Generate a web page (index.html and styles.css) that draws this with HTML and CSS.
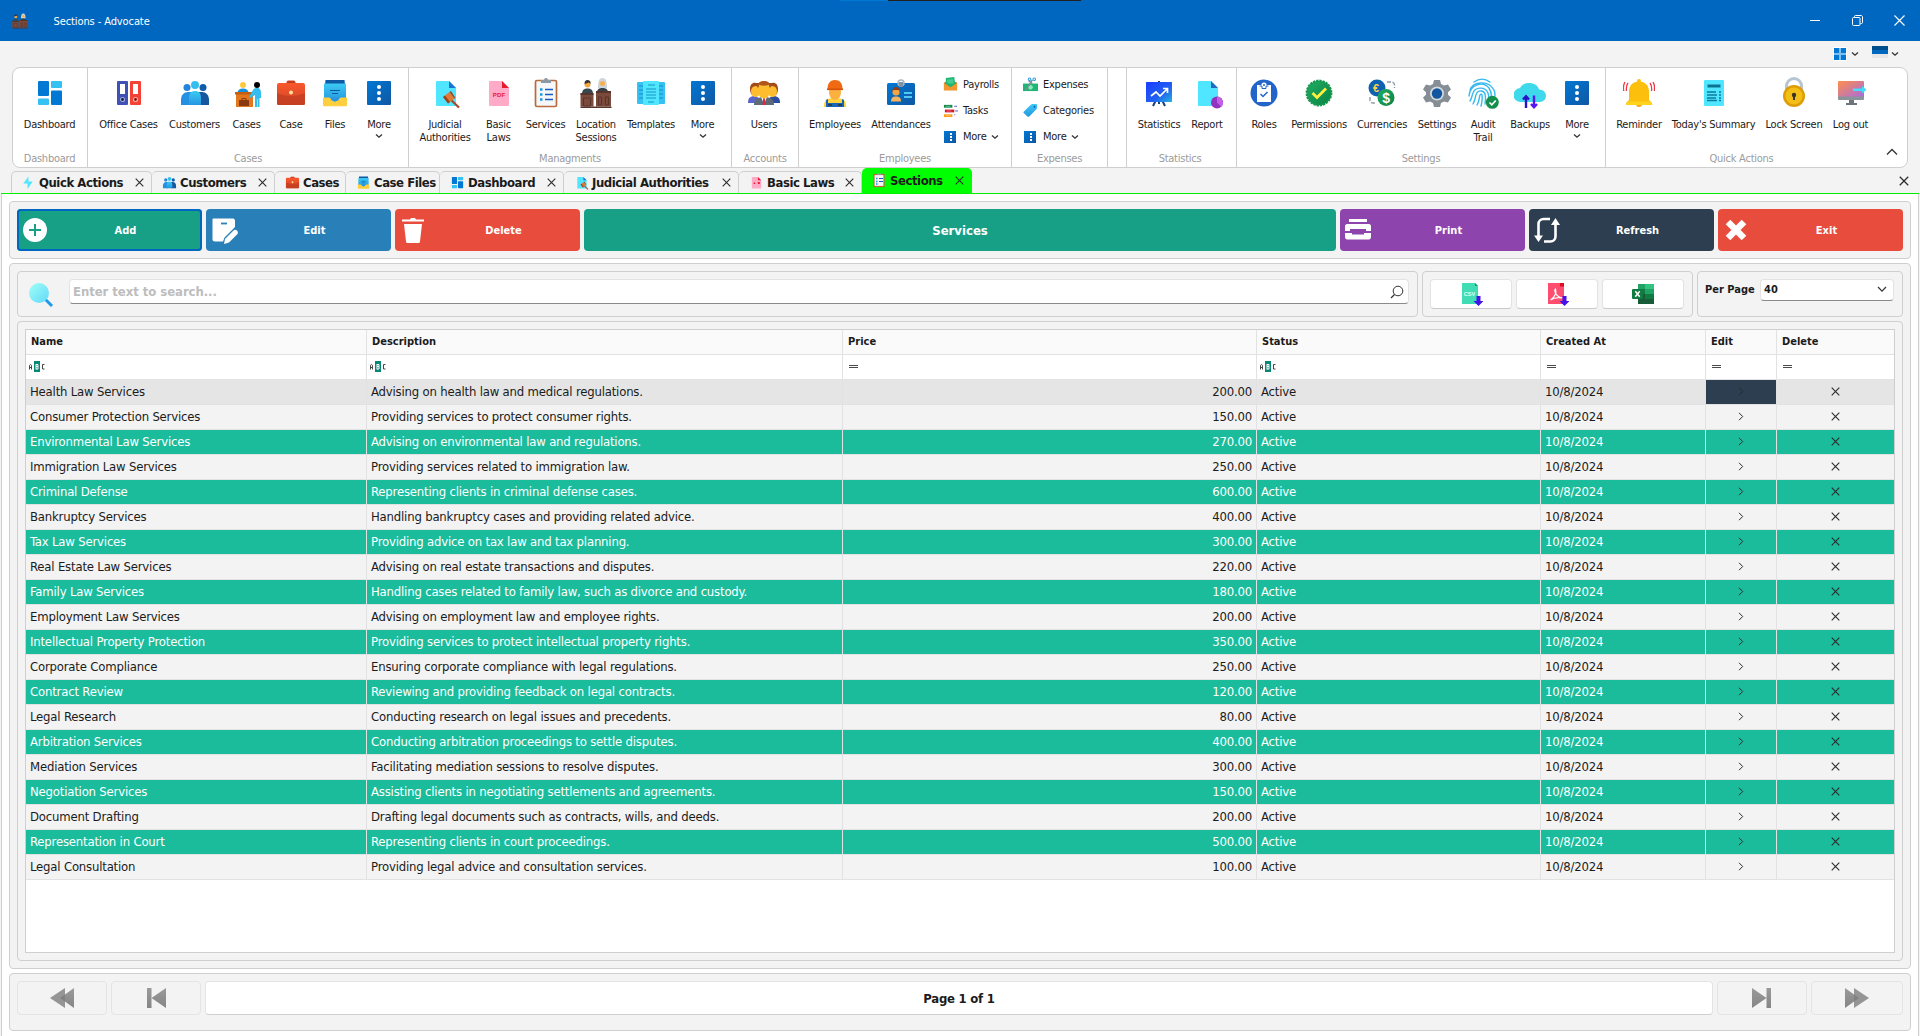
FILE: index.html
```html
<!DOCTYPE html>
<html lang="en">
<head>
<meta charset="utf-8">
<title>Sections - Advocate</title>
<link rel="stylesheet" href="styles.css">
</head>
<body>
<svg class="sprite" aria-hidden="true">
  <defs>
    <linearGradient id="g-blue" x1="0" y1="0" x2="1" y2="1"><stop offset="0" stop-color="#0078d4"/><stop offset="1" stop-color="#1057a3"/></linearGradient>
    <linearGradient id="g-sky" x1="0" y1="0" x2="0" y2="1"><stop offset="0" stop-color="#3ccbf4"/><stop offset="1" stop-color="#2596e0"/></linearGradient>
    <linearGradient id="g-red" x1="0" y1="0" x2="0" y2="1"><stop offset="0" stop-color="#f9572c"/><stop offset="1" stop-color="#cf4526"/></linearGradient>
    <linearGradient id="g-green" x1="0" y1="0" x2="1" y2="1"><stop offset="0" stop-color="#21ad64"/><stop offset="1" stop-color="#088242"/></linearGradient>
    <linearGradient id="g-board" x1="0" y1="0" x2="1" y2="1"><stop offset="0" stop-color="#1b3cff"/><stop offset=".6" stop-color="#2060f0"/><stop offset="1" stop-color="#25b4de"/></linearGradient>
    <linearGradient id="g-screen" x1="0" y1="0" x2="1" y2="1"><stop offset="0" stop-color="#ff8f4a"/><stop offset="1" stop-color="#a86be0"/></linearGradient>
    <linearGradient id="g-lens" x1="0" y1="0" x2="1" y2="1"><stop offset="0" stop-color="#a0fff6"/><stop offset="1" stop-color="#62d8fa"/></linearGradient>
    <linearGradient id="g-gray" x1="0" y1="0" x2="0" y2="1"><stop offset="0" stop-color="#9a9a9a"/><stop offset="1" stop-color="#858585"/></linearGradient>
  </defs>
  <symbol id="i-dash" viewBox="0 0 32 32"><rect x="4" y="4" width="11" height="15" rx="1" fill="#0078d4"/><rect x="17" y="4" width="11" height="7" rx="1" fill="#35c1f1"/><rect x="4" y="21.500" width="11" height="6.500" rx="1" fill="#35c1f1"/><rect x="17" y="13.500" width="11" height="14.500" rx="1" fill="#0078d4"/></symbol>
  <symbol id="i-binders" viewBox="0 0 32 32"><rect x="4" y="4" width="11" height="24" rx="1" fill="#3f51b5"/><rect x="17" y="4" width="11" height="24" rx="1" fill="#f44336"/><path fill="#fff" d="M7 7h5v10H7zM20 7h5v10h-5z"/><circle cx="9.500" cy="22.500" r="2" fill="#111a3a" stroke="#9fa8da" stroke-width="1.200"/><circle cx="22.500" cy="22.500" r="2" fill="#7f1010" stroke="#ffab91" stroke-width="1.200"/></symbol>
  <symbol id="i-people" viewBox="0 0 32 32"><circle cx="8" cy="10.500" r="3.500" fill="#2285dc"/><path d="M2 28v-5c0-5 3-8 7-8h4v13z" fill="#2490e2"/><circle cx="24" cy="10.500" r="3.500" fill="#0d5cab"/><path d="M30 28v-5c0-5-3-8-7-8h-4v13z" fill="#17579e"/><circle cx="16" cy="8" r="4" fill="#35bdef"/><path d="M10 28v-6c0-6 2-8 6-8s6 2 6 8v6z" fill="url(#g-sky)"/></symbol>
  <symbol id="i-desk" viewBox="0 0 32 32"><circle cx="12" cy="8" r="3" fill="#ffc83d"/><path d="M6.500 16c0-3 2-4.500 5.500-4.500s5.500 1.500 5.500 4.500z" fill="#1490df"/><rect x="5" y="16" width="17" height="14" fill="#e1771e"/><path d="M4 15h19v2.500H4z" fill="#c45f12"/><rect x="8" y="23" width="10" height="6" rx=".5" fill="#8a3a12"/><path d="M11 23v-1.500h4V23" fill="none" stroke="#8a3a12"/><circle cx="26" cy="8" r="3" fill="#000"/><path d="M18 20l4-7c1-1.500 2-2 4-2 3 0 4 2 4 5v5h-1.500v9h-2v-8H26v8h-2v-12l-4.500 3z" fill="#35bdef"/></symbol>
  <symbol id="i-case" viewBox="0 0 32 32"><path d="M12 6.500V5c0-.6.400-1 1-1h6c.6 0 1 .4 1 1v1.500" fill="#b83b1e" stroke="#d04525"/><rect x="2" y="6" width="28" height="22" rx="2" fill="url(#g-red)"/><path d="M2 16c8 4 20 4 28 0v11a1 1 0 0 1-1 1H3a1 1 0 0 1-1-1z" fill="#c23d20" opacity=".75"/><circle cx="16" cy="15.500" r="2" fill="#ffe39b"/></symbol>
  <symbol id="i-files" viewBox="0 0 32 32"><path d="M6.500 3h19l.5 5H6z" fill="#0e5aa5"/><path d="M5 6.500h22V24H5z" fill="url(#g-sky)"/><path d="M11 13.500h10M13 16.500h6" stroke="#0c5b9e" stroke-width="1.100"/><path d="M4 20.500h6c2 0 2 3.500 4 3.500h4c2 0 2-3.500 4-3.500h6V28a1.200 1.200 0 0 1-1.200 1.200H5.200A1.200 1.200 0 0 1 4 28z" fill="#ffcf3f"/><path d="M10 20.500h12c-2 0-2.500 1.500-6 4.500-3.500-3-4-4.500-6-4.500z" fill="#2a96e0"/></symbol>
  <symbol id="i-more" viewBox="0 0 32 32"><rect x="4" y="4" width="24" height="24" rx="1" fill="url(#g-blue)"/><g fill="#fff"><circle cx="16" cy="10" r="2"/><circle cx="16" cy="16" r="2"/><circle cx="16" cy="22" r="2"/></g></symbol>
  <symbol id="i-more-s" viewBox="0 0 15 15"><rect x="1" y="2" width="12" height="12" fill="url(#g-blue)"/><path d="M7 4h2v2H7zM7 7h2v2H7zM7 10h2v2H7z" fill="#fff"/></symbol>
  <symbol id="i-gavel" viewBox="0 0 32 32"><path d="M8 4h12l7 7v18H8a1 1 0 0 1-1-1V5a1 1 0 0 1 1-1z" fill="#50e6ff"/><path d="M20 4l7 7h-7z" fill="#1d73d2"/><path d="M21 22l9 8.500" stroke="#a5472a" stroke-width="2.200"/><path d="M14 20l6.500-5 5 6.500-6.500 5z" fill="#e07a35"/><path d="M14 20l2-1.500 5 6.500-2 1.500zM20.500 15l1.500-1 4.500 7-1 .5z" fill="#9c4221"/></symbol>
  <symbol id="i-pdf" viewBox="0 0 32 32"><path d="M7 4h12l7 7v17a1 1 0 0 1-1 1H7a1 1 0 0 1-1-1V5a1 1 0 0 1 1-1z" fill="#ffabc7"/><path d="M19 4l7 7h-7z" fill="#e8192c"/></symbol>
  <symbol id="i-clip" viewBox="0 0 32 32"><rect x="5.500" y="3.500" width="21" height="26" rx="1.500" fill="#f6f7f9" stroke="#b96b3e" stroke-width="1.700"/><path d="M11 3h3a2 2 0 0 1 4 0h3v3H11z" fill="#8c9aa5"/><path d="M10 12.500h2.500M10 17.500h2.500M10 22.500h2.500" stroke="#199be2" stroke-width="2.500"/><path d="M15 12.500h8M15 17.500h8M15 22.500h8" stroke="#185abd" stroke-width="1.500"/></symbol>
  <symbol id="i-clip-s" viewBox="0 0 15 15"><rect x="2" y="1.500" width="10" height="12" fill="#f6f7f9" stroke="#b96b3e" stroke-width="1.200"/><path d="M5 .5h4v1.500H5z" fill="#8c9aa5"/><path d="M4 5.500h1.500M4 8.500h1.500M4 11h1.500" stroke="#199be2" stroke-width="1.300"/><path d="M7 5.500h4M7 8.500h4" stroke="#185abd" stroke-width="1.200"/></symbol>
  <symbol id="i-court" viewBox="0 0 32 32"><path d="M18 11c0-7 1-10 4.500-10S27 4 27 11z" fill="#ccd5db"/><circle cx="22.500" cy="6.500" r="2.500" fill="#f6b04d"/><path d="M17 16c0-4 2-5 5.500-5s5.500 1 5.500 5z" fill="#37414a"/><circle cx="7.500" cy="7.500" r="3" fill="#f2a63c"/><path d="M4.500 7c0-3 1-4 3-4s3.500 1 3 4l-1.500-1.500z" fill="#333"/><path d="M2 17c0-4 2-5.500 5.500-5.500S13 13 13 17z" fill="#37474f"/><path d="M.500 16.500h13v13H.5z" fill="#7a4a3c"/><path d="M16 14.500h15v15H16z" fill="#7a4a3c"/><path d="M.500 16h13v2H.5zM16 14h15v2H16zM.500 29.500h31V31H.5z" fill="#58342b"/><path d="M3.500 21h7v8h-7zM18.500 20h3v8h-3zM25.500 20h3v8h-3z" fill="none" stroke="#58342b"/></symbol>
  <symbol id="i-templates" viewBox="0 0 32 32"><rect x="2" y="5" width="28" height="22" rx="1" fill="#35c1f1"/><path d="M4 9h5M4 13h5M4 17h5M4 21h5M24 9h4M24 13h4M24 17h4M24 21h4" stroke="#1791c7" stroke-width="1.200"/><rect x="8" y="4" width="16" height="24" rx="1" fill="#50e6ff"/><path d="M13 8h7M11 12h10M11 15h10M11 18h10M11 21h10M13 25h6" stroke="#1493c8" stroke-width="1.200"/></symbol>
  <symbol id="i-users" viewBox="0 0 32 32"><path d="M0 26c0-5 2-7 7-7l4 2v5z" fill="#5b64c8"/><path d="M32 26c0-5-2-7-7-7l-4 2v5z" fill="#2b4ea0"/><path d="M2 12c0-5 3-7 6-6h3v12H4c-1-1-2-3-2-6zM30 12c0-5-3-7-6-6h-3v12h7c1-1 2-3 2-6z" fill="#a24a1c"/><ellipse cx="7.500" cy="14.500" rx="4.500" ry="5.500" fill="#fdbd2e"/><ellipse cx="24.500" cy="14.500" rx="4.500" ry="5.500" fill="#fdbd2e"/><path d="M6 28c0-6 4-8 10-8s10 2 10 8z" fill="#5d6b78"/><path d="M13 20h6l-3 7z" fill="#fff"/><path d="M15.200 21h1.600l.6 7h-2.800z" fill="#dd2a3b"/><ellipse cx="16" cy="13.500" rx="6" ry="8" fill="#fdbd2e"/><path d="M9.500 11c0-6 3-7 6.500-7s6.500 1 6.500 7l-2-3c-3 1-6 1-9 0z" fill="#b0571d"/></symbol>
  <symbol id="i-worker" viewBox="0 0 32 32"><path d="M5 29c0-6 3-8 11-8s11 2 11 8v1H5z" fill="#ffd33c"/><path d="M9 22v4h14v-4l2 1v7H7v-7z" fill="#1766b3"/><ellipse cx="16" cy="15.500" rx="6" ry="7.500" fill="#fbb040"/><path d="M8.500 12c0-6 3-9 7.500-9s7.500 3 7.500 9z" fill="#ef6a12"/><path d="M8 11.500h16v1.600H8z" fill="#d4500b"/><path d="M9 28h4M19 28h4" stroke="#27323c" stroke-width="1.500"/></symbol>
  <symbol id="i-badge" viewBox="0 0 32 32"><rect x="2" y="6" width="28" height="22" rx="1.500" fill="url(#g-blue)"/><circle cx="16" cy="6" r="3" fill="none" stroke="#a9b6c2" stroke-width="1.500"/><path d="M14 5h4v5h-4z" fill="#7f93a6"/><circle cx="11" cy="15" r="3.600" fill="#f7a541"/><path d="M7.400 15c0-4 1.500-5 3.600-5s3.600 1 3.600 5l-1-2h-5z" fill="#8e3e17"/><path d="M6 24.500c0-4 2-5 5-5s5 1 5 5z" fill="#f7b35e"/><path d="M19 16h8M19 20h8" stroke="#50c8f5" stroke-width="1.800"/></symbol>
  <symbol id="i-payroll" viewBox="0 0 16 16"><path d="M1 6l7-3 7 3v8H1z" fill="#c9661a"/><path d="M3 1l9-1 1 8-5 3-5-3z" fill="#1fb573"/><path d="M4 3l7-1v5H5z" fill="#41cf92"/><path d="M1 6l7 5 7-5v8H1z" fill="#f2962e"/></symbol>
  <symbol id="i-tasks" viewBox="0 0 16 16"><path fill="#0f8a49" d="M1 2h9v3H1z"/><path fill="#d3172b" d="M2 7h10v3H2z"/><path fill="#ff9c17" d="M1 12h9v3H1z"/><path d="M12 3.500h3M13 8.500h3M12 12.500h1" stroke="#4a54b8"/><path d="M3 3.500h5M4 8.500h5M3 13.500h5" stroke="#fff" opacity=".4"/></symbol>
  <symbol id="i-expense" viewBox="0 0 16 16"><path fill="#1fb573" d="M0 7h16v8H0z"/><circle cx="8" cy="11" r="2.500" fill="#8ae7bb"/><path d="M3 14l7-11M6 4l4 3" stroke="#7f8c96" stroke-width="1.500"/><circle cx="7" cy="2.500" r="1.400" fill="none" stroke="#2a9de2" stroke-width="1.100"/><circle cx="12" cy="2.500" r="1.400" fill="none" stroke="#2a9de2" stroke-width="1.100"/></symbol>
  <symbol id="i-tag" viewBox="0 0 16 16"><path d="M1 9l7-7c1-1 2-1 6-1 1 0 1 1 1 1 0 3 0 4-1 5l-7 7c-1 1-1.600 1-2.500 0L1 11c-.800-.800-.800-1.300 0-2z" fill="url(#g-sky)"/><circle cx="12.300" cy="4" r="1" fill="#0b5ea8"/></symbol>
  <symbol id="i-stats" viewBox="0 0 32 32"><path d="M13 23l-3 6M19 23l3 6M16 23v4" stroke="#17407c" stroke-width="2"/><path d="M15 4h2v2h-2z" fill="#17407c"/><rect x="3" y="5" width="26" height="20" rx=".5" fill="url(#g-board)"/><path d="M8 19l5-4 4 4 7-7M20 11.500h4.500V16" fill="none" stroke="#fff" stroke-width="1.700"/></symbol>
  <symbol id="i-report" viewBox="0 0 32 32"><path d="M8 4h12l7 7v18H8a1 1 0 0 1-1-1V5a1 1 0 0 1 1-1z" fill="#50e6ff"/><path d="M20 4l7 7h-7z" fill="#2468c4"/><circle cx="26" cy="25.500" r="6" fill="#9332bf"/><path d="M26 25.500v-6a6 6 0 0 1 4.200 10.200z" fill="#c25fe8"/></symbol>
  <symbol id="i-roles" viewBox="0 0 32 32"><circle cx="16" cy="16" r="13.500" fill="#2264c9"/><path d="M9 8h14v17H9z" fill="#fff"/><circle cx="16" cy="8" r="2.600" fill="#fff"/><circle cx="16" cy="8" r="1" fill="#2264c9"/><path d="M11.500 9h2.500v2.500h4V9h2.500" fill="none" stroke="#2264c9"/><path d="M12.500 17l2.500 2.500 4.500-4.500" fill="none" stroke="#2264c9" stroke-width="1.500"/></symbol>
  <symbol id="i-perm" viewBox="0 0 32 32"><circle cx="16" cy="16" r="12.300" fill="url(#g-green)" stroke="#16984f" stroke-width="2.200" stroke-dasharray="2.300 .92"/><path d="M9.500 16l4.500 4.500 9-9" fill="none" stroke="#ffef3e" stroke-width="2.700"/></symbol>
  <symbol id="i-gear" viewBox="0 0 32 32"><path d="M13 3h6l1 4 3 1.600 4-1.200 3 5-3 2.800v2.600l3 2.800-3 5-4-1.200-3 1.600-1 4h-6l-1-4-3-1.600-4 1.200-3-5 3-2.800v-2.600l-3-2.800 3-5 4 1.200L12 7z" fill="#858d95"/><circle cx="16" cy="16.500" r="7" fill="#d3d8dc"/><circle cx="16" cy="16.500" r="5.200" fill="#1256a0"/></symbol>
  <symbol id="i-finger" viewBox="0 0 32 32"><g fill="none" stroke="#35b9ef" stroke-width="1.400" stroke-linecap="round"><path d="M7 5c5-3.600 11-3.600 16 0M3 13c3-9 19-10 24 0 .6 1.500 1 4 1 6M2 19c1-12 14-15 20-8 2 3 2.500 6 2.500 9M3 24c2-3 2-6 3-8 2-6 12-7 15 0 .8 2 1 5 1 8M6 27c3-5 2-8 3.500-10.500 2-4 7.500-3 8.500.5.800 3 .5 7 0 10M10 28c3-5 2-8 3-10 .6-1 1.800-1 2 0 .5 3 0 7-1 11"/></g><circle cx="25.300" cy="25.300" r="6.500" fill="#12904c"/><path d="M22.500 25.500l2.300 2.300 4-4.300" fill="none" stroke="#fff" stroke-width="1.700"/></symbol>
  <symbol id="i-cloud" viewBox="0 0 32 32"><path d="M7 25a7 7 0 0 1-1-14C8 7 12 5.500 16 6c5 .4 8 3 9 6.500 4 .2 7 2.500 7 6.200 0 3.800-3 6.300-6.500 6.300z" fill="#3fd9ec"/><path d="M12 31V21M9 22.500l3-3.200 3 3.200" fill="none" stroke="#2a12c8" stroke-width="2.400"/><path d="M20 18.500V29M17 27l3 3.200 3-3.200" fill="none" stroke="#5a14f2" stroke-width="2.400"/></symbol>
  <symbol id="i-bell" viewBox="0 0 32 32"><circle cx="16" cy="27" r="3" fill="#f4a81b"/><circle cx="16" cy="4" r="2" fill="#ffc20e"/><path d="M6 23V15C6 8 10 4.500 16 4.500S26 8 26 15v8l3 3v2H3v-2z" fill="#fbbf0c"/><path d="M4.500 24.500h23L29.500 28h-27z" fill="#ffd31c"/><path d="M5 6c-1.500 2-2 4.500-1.500 8M2 5C.5 7.500 0 10 .7 14M27 6c1.500 2 2 4.500 1.500 8M30 5c1.500 2.500 2 5 1.300 9" fill="none" stroke="#f03a47" stroke-width="1.300"/></symbol>
  <symbol id="i-summary" viewBox="0 0 32 32"><rect x="6" y="3" width="20" height="26" rx="1" fill="#50e6ff"/><path d="M9.500 9h13" stroke="#0a7590" stroke-width="3"/><path d="M9 15h9M9 18h10M9 21h9M9 23.500h10M21 15h2M21 18h2M21 21h2M21 23.500h2" stroke="#0a7c9a" stroke-width="1.300"/></symbol>
  <symbol id="i-lock" viewBox="0 0 32 32"><path d="M8.500 16V9a7.500 7.500 0 0 1 15 0v7" fill="none" stroke="#b7c5d0" stroke-width="3"/><circle cx="16" cy="19" r="11" fill="#dd9d06"/><circle cx="16" cy="19" r="8.500" fill="#f3bf17"/><circle cx="16" cy="18" r="2.200" fill="#3c3320"/><path d="M15 18h2v5h-2z" fill="#3c3320"/></symbol>
  <symbol id="i-logout" viewBox="0 0 32 32"><path d="M4 4h24a1 1 0 0 1 1 1v15H3V5a1 1 0 0 1 1-1z" fill="url(#g-screen)"/><path d="M3 19.500h26V22a1 1 0 0 1-1 1H4a1 1 0 0 1-1-1z" fill="#8b939b"/><path d="M14 23h5v3h3v2H11v-2h3z" fill="#6c747c"/><path d="M18 11.500h9V9l4.500 3.700-4.500 3.700V14h-9z" fill="#45dcff"/></symbol>
  <symbol id="i-bolt" viewBox="0 0 12 16"><path d="M6.500 1.500V7H11l-5.500 8V9H1z" fill="#50e6ff"/></symbol>
  <symbol id="i-chev" viewBox="0 0 8 6"><path d="M1 1.500l3 2.700 3-2.700" fill="none" stroke="#333" stroke-width="1.300"/></symbol>
  <symbol id="i-x" viewBox="0 0 9 9"><path d="M.7.7l7.600 7.600M8.300.7L.7 8.300" stroke="#2b2b2b" stroke-width="1.100"/></symbol>
  <symbol id="i-go" viewBox="0 0 6 9"><path d="M1 .8l3.700 3.700L1 8.200" fill="none" stroke="#2b2b2b" stroke-width="1"/></symbol>
  <symbol id="i-abc" viewBox="0 0 16 12"><rect x="5" y="0" width="6" height="11" fill="#0b8576"/><path d="M.5 8.500V5c0-2 2-2 2 0v3.500M.5 6.500h2M15.500 3.500h-2v4.500h2" fill="none" stroke="#444"/><path d="M7 3v5.500M7 3.500h2v2H7h2v2.500H7" fill="none" stroke="#fff"/></symbol>
  <symbol id="i-eq" viewBox="0 0 9 3"><path d="M0 .5h9M0 2.500h9" stroke="#4a4a4a"/></symbol>
</svg>

<header class="titlebar">
  <svg class="app-icon"><use href="#i-court"/></svg>
  <h1 class="title">Sections - Advocate</h1>
  <div class="window-controls">
    <svg width="10" height="10" viewBox="0 0 10 10"><path d="M0 5.500h10" stroke="#fff"/></svg>
    <svg width="11" height="11" viewBox="0 0 11 11"><rect x=".5" y="2.500" width="7.500" height="8" rx="1" fill="none" stroke="#fff"/><path d="M2.500 2.500v-1c0-.6.400-1 1-1H9c.8 0 1.500.7 1.500 1.500v5.500c0 .6-.4 1-1 1H8.500" fill="none" stroke="#fff"/></svg>
    <svg width="11" height="11" viewBox="0 0 11 11"><path d="M.5.5l10 10M10.500.5l-10 10" stroke="#fff" stroke-width="1.100"/></svg>
  </div>
  <div class="peek"></div>
</header>

<div class="quickbar">
  <svg width="14" height="14" viewBox="0 0 14 14"><path fill="#fff" d="M0 0h14v14H0z"/><path fill="#7fc0f0" d="M1 1h12v12H1z"/><path fill="#0078d4" d="M1 1h5v5H1zM8 1h5v5H8zM1 8h5v5H1zM8 8h5v5H8z"/></svg>
  <svg class="chev"><use href="#i-chev"/></svg>
  <svg class="skin" width="16" height="16" viewBox="0 0 16 16"><path fill="#004e8c" d="M0 0h16v4H0z"/><path fill="#0067c0" d="M0 4h16v4H0z"/><path fill="#e6e6e6" d="M0 8h16v4H0z"/></svg>
  <svg class="chev"><use href="#i-chev"/></svg>
</div>

<nav class="ribbon">
  <section class="group g-dashboard"><div class="items">
    <div class="item"><svg><use href="#i-dash"/></svg><span>Dashboard</span></div>
  </div><div class="caption">Dashboard</div></section>
  <section class="group g-cases"><div class="items">
    <div class="item"><svg><use href="#i-binders"/></svg><span>Office Cases</span></div>
    <div class="item"><svg><use href="#i-people"/></svg><span>Customers</span></div>
    <div class="item"><svg><use href="#i-desk"/></svg><span>Cases</span></div>
    <div class="item"><svg><use href="#i-case"/></svg><span>Case</span></div>
    <div class="item"><svg><use href="#i-files"/></svg><span>Files</span></div>
    <div class="item"><svg><use href="#i-more"/></svg><span>More</span><svg class="chev"><use href="#i-chev"/></svg></div>
  </div><div class="caption">Cases</div></section>
  <section class="group g-manage"><div class="items">
    <div class="item"><svg><use href="#i-gavel"/></svg><span>Judicial<br>Authorities</span></div>
    <div class="item"><svg viewBox="0 0 32 32"><use href="#i-pdf" width="32" height="32"/><text x="16" y="20" class="ic-pdf">PDF</text></svg><span>Basic<br>Laws</span></div>
    <div class="item"><svg><use href="#i-clip"/></svg><span>Services</span></div>
    <div class="item"><svg><use href="#i-court"/></svg><span>Location<br>Sessions</span></div>
    <div class="item"><svg><use href="#i-templates"/></svg><span>Templates</span></div>
    <div class="item"><svg><use href="#i-more"/></svg><span>More</span><svg class="chev"><use href="#i-chev"/></svg></div>
  </div><div class="caption">Managments</div></section>
  <section class="group g-accounts"><div class="items">
    <div class="item"><svg><use href="#i-users"/></svg><span>Users</span></div>
  </div><div class="caption">Accounts</div></section>
  <section class="group g-employees"><div class="items">
    <div class="item"><svg><use href="#i-worker"/></svg><span>Employees</span></div>
    <div class="item"><svg><use href="#i-badge"/></svg><span>Attendances</span></div>
    <ul class="stack">
      <li><svg><use href="#i-payroll"/></svg>Payrolls</li>
      <li><svg><use href="#i-tasks"/></svg>Tasks</li>
      <li><svg><use href="#i-more-s"/></svg>More<svg class="chev"><use href="#i-chev"/></svg></li>
    </ul>
  </div><div class="caption">Employees</div></section>
  <section class="group g-expenses"><div class="items">
    <ul class="stack">
      <li><svg><use href="#i-expense"/></svg>Expenses</li>
      <li><svg><use href="#i-tag"/></svg>Categories</li>
      <li><svg><use href="#i-more-s"/></svg>More<svg class="chev"><use href="#i-chev"/></svg></li>
    </ul>
  </div><div class="caption">Expenses</div></section>
  <section class="group g-blank"></section>
  <section class="group g-stats"><div class="items">
    <div class="item"><svg><use href="#i-stats"/></svg><span>Statistics</span></div>
    <div class="item"><svg><use href="#i-report"/></svg><span>Report</span></div>
  </div><div class="caption">Statistics</div></section>
  <section class="group g-settings"><div class="items">
    <div class="item"><svg><use href="#i-roles"/></svg><span>Roles</span></div>
    <div class="item"><svg><use href="#i-perm"/></svg><span>Permissions</span></div>
    <div class="item"><svg viewBox="0 0 32 32"><path d="M21 5h4.500a3 3 0 0 1 3 3v3M4 20v3a3 3 0 0 0 3 3h3" fill="none" stroke="#9099a2" stroke-width="1.400" stroke-dasharray="4 1.500"/><circle cx="11" cy="11" r="8.500" fill="#0f62b0"/><circle cx="20" cy="20.500" r="8.500" fill="url(#g-green)"/><text x="10" y="15" class="ic-eur">€</text><text x="20" y="25.500" class="ic-usd">$</text></svg><span>Currencies</span></div>
    <div class="item"><svg><use href="#i-gear"/></svg><span>Settings</span></div>
    <div class="item"><svg><use href="#i-finger"/></svg><span>Audit<br>Trail</span></div>
    <div class="item"><svg><use href="#i-cloud"/></svg><span>Backups</span></div>
    <div class="item"><svg><use href="#i-more"/></svg><span>More</span><svg class="chev"><use href="#i-chev"/></svg></div>
  </div><div class="caption">Settings</div></section>
  <section class="group g-quick"><div class="items">
    <div class="item"><svg><use href="#i-bell"/></svg><span>Reminder</span></div>
    <div class="item"><svg><use href="#i-summary"/></svg><span>Today's Summary</span></div>
    <div class="item"><svg><use href="#i-lock"/></svg><span>Lock Screen</span></div>
    <div class="item"><svg><use href="#i-logout"/></svg><span>Log out</span></div>
  </div><div class="caption">Quick Actions</div>
    <svg class="collapse" viewBox="0 0 12 8"><path d="M1 6.500l5-5 5 5" fill="none" stroke="#333" stroke-width="1.300"/></svg></section>
</nav>

<div class="tabs">
  <div class="tab t-quick"><svg><use href="#i-bolt"/></svg><span>Quick Actions</span><svg class="x"><use href="#i-x"/></svg></div>
  <div class="tab t-customers"><svg><use href="#i-people"/></svg><span>Customers</span><svg class="x"><use href="#i-x"/></svg></div>
  <div class="tab t-cases"><svg><use href="#i-case"/></svg><span>Cases</span></div>
  <div class="tab t-files"><svg><use href="#i-files"/></svg><span>Case Files</span></div>
  <div class="tab t-dashboard"><svg><use href="#i-dash"/></svg><span>Dashboard</span><svg class="x"><use href="#i-x"/></svg></div>
  <div class="tab t-judicial"><svg><use href="#i-gavel"/></svg><span>Judicial Authorities</span><svg class="x"><use href="#i-x"/></svg></div>
  <div class="tab t-laws"><svg viewBox="0 0 32 32"><use href="#i-pdf" width="32" height="32"/><path d="M10 16h3v3h-3zM19 15h4v4h-4z" fill="#e8192c"/></svg><span>Basic Laws</span><svg class="x"><use href="#i-x"/></svg></div>
  <div class="tab t-sections active"><svg><use href="#i-clip-s"/></svg><span>Sections</span><svg class="x"><use href="#i-x"/></svg></div>
  <svg class="x close-all"><use href="#i-x"/></svg>
</div>

<main class="page">
  <div class="panel toolbar">
    <button class="btn add"><svg viewBox="0 0 28 28"><circle cx="14" cy="14" r="12" fill="#fff"/><path d="M14 8v12M8 14h12" stroke="#17a086" stroke-width="2"/></svg><span>Add</span></button>
    <button class="btn edit"><svg viewBox="0 0 28 28"><path d="M3 2.500h20c1 0 2 1 2 2V11L14.500 21.500l-1.500 4H5c-1.500 0-2.500-1-2.500-2V3.500z" fill="#fff"/><path d="M11 7.500h6" stroke="#2980b9" stroke-width="1.800"/><path d="M14 28l1-5 8.500-8.500c2-2 5.500 1 4 3.500L19 26.500z" fill="#fff"/></svg><span>Edit</span></button>
    <button class="btn delete"><svg viewBox="0 0 28 28"><path d="M3 3.500h8l1-1.500h4l1 1.500h8v2H3zM5 8h18l-2 17.500c0 1-1 1.500-2 1.500H9c-1 0-2-.5-2-1.500z" fill="#fff"/></svg><span>Delete</span></button>
    <div class="heading">Services</div>
    <button class="btn print"><svg viewBox="0 0 28 28"><path d="M5 3h18v3H5zM1 15V10c0-1 1-2 2-2h22c1 0 2 1 2 2v5h-5v-2H6v2zM1 17h7v1.500h12V17h7v4c0 1-1 2.500-2 2.500H3c-1 0-2-1.500-2-2.500z" fill="#fff"/></svg><span>Print</span></button>
    <button class="btn refresh"><svg viewBox="0 0 28 28"><path d="M17 3h-6.500C8 3 5.500 5 5.500 8v14M11 25.500h6.500c2.500 0 5-2 5-5V6" fill="none" stroke="#fff" stroke-width="2.600"/><path d="M1 19.500h9L5.500 26zM18 9h9l-4.500-7z" fill="#fff"/></svg><span>Refresh</span></button>
    <button class="btn exit"><svg viewBox="0 0 28 28"><path d="M6 6l16 16M22 6L6 22" stroke="#fff" stroke-width="6.500"/></svg><span>Exit</span></button>
  </div>

  <div class="panel body">
    <div class="filters">
      <div class="panel search">
        <svg class="lens" viewBox="0 0 26 26"><path d="M17 17l7 7" stroke="#1e9be6" stroke-width="3"/><circle cx="11" cy="11" r="10" fill="url(#g-lens)"/></svg>
        <div class="field"><span class="placeholder">Enter text to search...</span><svg viewBox="0 0 14 14"><circle cx="8" cy="6" r="4.800" fill="none" stroke="#333"/><path d="M4.500 9.500L1 13" stroke="#333" stroke-width="1.200"/></svg></div>
      </div>
      <div class="panel export">
        <button class="ex"><svg viewBox="0 0 24 24"><path d="M3 1h13l3 3v18H3z" fill="#3fdcb5"/><path d="M16 1l3 3h-3z" fill="#0c9a73"/><text x="10.500" y="14" class="ic-csv">CSV</text><path d="M18 14v5h-3l5 5 5-5h-3v-5z" transform="translate(-.5 0)" fill="#4313ea"/></svg></button>
        <button class="ex"><svg viewBox="0 0 24 24"><path d="M3 1h13l3 3v18H3z" fill="#ff4d70"/><path d="M15 1h4v3.500h-4z" fill="#e00b1c"/><path d="M5.500 18c5-3 6-8 5-11-1.500 1 0 8 7 9-4-.8-9 0-12 2z" fill="none" stroke="#fff" stroke-width="1.200"/><path d="M18 14v5h-3l5 5 5-5h-3v-5z" transform="translate(-.5 0)" fill="#4313ea"/></svg></button>
        <button class="ex"><svg viewBox="0 0 24 24"><path d="M7 2h7v5H7z" fill="#21a366"/><path d="M14 2h9v5h-9z" fill="#33c481"/><path d="M7 7h7v5H7z" fill="#107c41"/><path d="M14 7h9v5h-9z" fill="#21a366"/><path d="M7 12h7v10H7z" fill="#185c37"/><path d="M14 12h9v5h-9z" fill="#107c41"/><path d="M14 17h9v5h-9z" fill="#185c37"/><rect x="1" y="7" width="11" height="10" rx="1" fill="#107c41"/><path d="M4.300 9.200l4.400 5.600M8.700 9.200l-4.400 5.600" stroke="#fff" stroke-width="1.500"/></svg></button>
      </div>
      <div class="panel perpage">
        <label>Per Page</label>
        <div class="select">40<svg viewBox="0 0 10 7"><path d="M1 1l4 4.200L9 1" fill="none" stroke="#333" stroke-width="1.200"/></svg></div>
      </div>
    </div>

    <div class="panel grid">
      <div class="table-wrap">
      <table>
        <colgroup><col class="c-name"><col class="c-desc"><col class="c-price"><col class="c-status"><col class="c-created"><col class="c-edit"><col class="c-delete"></colgroup>
        <thead>
          <tr><th>Name</th><th>Description</th><th>Price</th><th>Status</th><th>Created At</th><th>Edit</th><th>Delete</th></tr>
          <tr class="filter"><td><svg class="abc"><use href="#i-abc"/></svg></td><td><svg class="abc"><use href="#i-abc"/></svg></td><td><svg class="eq"><use href="#i-eq"/></svg></td><td><svg class="abc"><use href="#i-abc"/></svg></td><td><svg class="eq"><use href="#i-eq"/></svg></td><td><svg class="eq"><use href="#i-eq"/></svg></td><td><svg class="eq"><use href="#i-eq"/></svg></td></tr>
        </thead>
        <tbody>
          <tr class="selected"><td>Health Law Services</td><td>Advising on health law and medical regulations.</td><td class="num">200.00</td><td>Active</td><td>10/8/2024</td><td class="act focus"><svg class="go"><use href="#i-go"/></svg></td><td class="act"><svg class="x"><use href="#i-x"/></svg></td></tr>
          <tr><td>Consumer Protection Services</td><td>Providing services to protect consumer rights.</td><td class="num">150.00</td><td>Active</td><td>10/8/2024</td><td class="act"><svg class="go"><use href="#i-go"/></svg></td><td class="act"><svg class="x"><use href="#i-x"/></svg></td></tr>
          <tr class="alt"><td>Environmental Law Services</td><td>Advising on environmental law and regulations.</td><td class="num">270.00</td><td>Active</td><td>10/8/2024</td><td class="act"><svg class="go"><use href="#i-go"/></svg></td><td class="act"><svg class="x"><use href="#i-x"/></svg></td></tr>
          <tr><td>Immigration Law Services</td><td>Providing services related to immigration law.</td><td class="num">250.00</td><td>Active</td><td>10/8/2024</td><td class="act"><svg class="go"><use href="#i-go"/></svg></td><td class="act"><svg class="x"><use href="#i-x"/></svg></td></tr>
          <tr class="alt"><td>Criminal Defense</td><td>Representing clients in criminal defense cases.</td><td class="num">600.00</td><td>Active</td><td>10/8/2024</td><td class="act"><svg class="go"><use href="#i-go"/></svg></td><td class="act"><svg class="x"><use href="#i-x"/></svg></td></tr>
          <tr><td>Bankruptcy Services</td><td>Handling bankruptcy cases and providing related advice.</td><td class="num">400.00</td><td>Active</td><td>10/8/2024</td><td class="act"><svg class="go"><use href="#i-go"/></svg></td><td class="act"><svg class="x"><use href="#i-x"/></svg></td></tr>
          <tr class="alt"><td>Tax Law Services</td><td>Providing advice on tax law and tax planning.</td><td class="num">300.00</td><td>Active</td><td>10/8/2024</td><td class="act"><svg class="go"><use href="#i-go"/></svg></td><td class="act"><svg class="x"><use href="#i-x"/></svg></td></tr>
          <tr><td>Real Estate Law Services</td><td>Advising on real estate transactions and disputes.</td><td class="num">220.00</td><td>Active</td><td>10/8/2024</td><td class="act"><svg class="go"><use href="#i-go"/></svg></td><td class="act"><svg class="x"><use href="#i-x"/></svg></td></tr>
          <tr class="alt"><td>Family Law Services</td><td>Handling cases related to family law, such as divorce and custody.</td><td class="num">180.00</td><td>Active</td><td>10/8/2024</td><td class="act"><svg class="go"><use href="#i-go"/></svg></td><td class="act"><svg class="x"><use href="#i-x"/></svg></td></tr>
          <tr><td>Employment Law Services</td><td>Advising on employment law and employee rights.</td><td class="num">200.00</td><td>Active</td><td>10/8/2024</td><td class="act"><svg class="go"><use href="#i-go"/></svg></td><td class="act"><svg class="x"><use href="#i-x"/></svg></td></tr>
          <tr class="alt"><td>Intellectual Property Protection</td><td>Providing services to protect intellectual property rights.</td><td class="num">350.00</td><td>Active</td><td>10/8/2024</td><td class="act"><svg class="go"><use href="#i-go"/></svg></td><td class="act"><svg class="x"><use href="#i-x"/></svg></td></tr>
          <tr><td>Corporate Compliance</td><td>Ensuring corporate compliance with legal regulations.</td><td class="num">250.00</td><td>Active</td><td>10/8/2024</td><td class="act"><svg class="go"><use href="#i-go"/></svg></td><td class="act"><svg class="x"><use href="#i-x"/></svg></td></tr>
          <tr class="alt"><td>Contract Review</td><td>Reviewing and providing feedback on legal contracts.</td><td class="num">120.00</td><td>Active</td><td>10/8/2024</td><td class="act"><svg class="go"><use href="#i-go"/></svg></td><td class="act"><svg class="x"><use href="#i-x"/></svg></td></tr>
          <tr><td>Legal Research</td><td>Conducting research on legal issues and precedents.</td><td class="num">80.00</td><td>Active</td><td>10/8/2024</td><td class="act"><svg class="go"><use href="#i-go"/></svg></td><td class="act"><svg class="x"><use href="#i-x"/></svg></td></tr>
          <tr class="alt"><td>Arbitration Services</td><td>Conducting arbitration proceedings to settle disputes.</td><td class="num">400.00</td><td>Active</td><td>10/8/2024</td><td class="act"><svg class="go"><use href="#i-go"/></svg></td><td class="act"><svg class="x"><use href="#i-x"/></svg></td></tr>
          <tr><td>Mediation Services</td><td>Facilitating mediation sessions to resolve disputes.</td><td class="num">300.00</td><td>Active</td><td>10/8/2024</td><td class="act"><svg class="go"><use href="#i-go"/></svg></td><td class="act"><svg class="x"><use href="#i-x"/></svg></td></tr>
          <tr class="alt"><td>Negotiation Services</td><td>Assisting clients in negotiating settlements and agreements.</td><td class="num">150.00</td><td>Active</td><td>10/8/2024</td><td class="act"><svg class="go"><use href="#i-go"/></svg></td><td class="act"><svg class="x"><use href="#i-x"/></svg></td></tr>
          <tr><td>Document Drafting</td><td>Drafting legal documents such as contracts, wills, and deeds.</td><td class="num">200.00</td><td>Active</td><td>10/8/2024</td><td class="act"><svg class="go"><use href="#i-go"/></svg></td><td class="act"><svg class="x"><use href="#i-x"/></svg></td></tr>
          <tr class="alt"><td>Representation in Court</td><td>Representing clients in court proceedings.</td><td class="num">500.00</td><td>Active</td><td>10/8/2024</td><td class="act"><svg class="go"><use href="#i-go"/></svg></td><td class="act"><svg class="x"><use href="#i-x"/></svg></td></tr>
          <tr><td>Legal Consultation</td><td>Providing legal advice and consultation services.</td><td class="num">100.00</td><td>Active</td><td>10/8/2024</td><td class="act"><svg class="go"><use href="#i-go"/></svg></td><td class="act"><svg class="x"><use href="#i-x"/></svg></td></tr>
        </tbody>
      </table>
      </div>
    </div>
  </div>

  <div class="panel pager">
    <button class="pg"><svg viewBox="0 0 24 20"><path d="M24 0v20L10 10z" fill="url(#g-gray)"/><path d="M15 0v20L0 10z" fill="#7d7d7d" opacity=".8"/></svg></button>
    <button class="pg"><svg viewBox="0 0 24 20"><path d="M3 0h4.500v20H3zM22 0v20L7.500 10z" fill="url(#g-gray)"/></svg></button>
    <div class="page-info">Page 1 of 1</div>
    <button class="pg"><svg viewBox="0 0 24 20"><path d="M21 0h-4.500v20H21zM2 0v20L16.500 10z" fill="url(#g-gray)"/></svg></button>
    <button class="pg"><svg viewBox="0 0 24 20"><path d="M0 0v20l14-10z" fill="url(#g-gray)"/><path d="M9 0v20l15-10z" fill="#7d7d7d" opacity=".8"/></svg></button>
  </div>
</main>
</body>
</html>
```
FILE: styles.css
```css
* { box-sizing: border-box; }

body {
  margin: 0;
  width: 1920px;
  height: 1036px;
  overflow: hidden;
  display: flex;
  flex-direction: column;
  background: #f3f3f3;
  color: #1b1b1b;
  font: 11px/13px "DejaVu Sans Condensed", "DejaVu Sans", sans-serif;
  letter-spacing: -0.25px;
}

svg { display: block; flex: none; }
button { border: 0; margin: 0; padding: 0; font: inherit; letter-spacing: inherit; color: inherit; }
.sprite { position: absolute; width: 0; height: 0; }
.chev { width: 8px; height: 6px; }
.x { width: 9px; height: 9px; }

.ic-pdf { font: bold 6px "Liberation Sans", sans-serif; fill: #e8192c; text-anchor: middle; letter-spacing: 0.2px; }
.ic-csv { font: bold 5.5px "Liberation Sans", sans-serif; fill: #e6fff8; text-anchor: middle; letter-spacing: 0; }
.ic-eur { font: bold 11px "Liberation Sans", sans-serif; fill: #ffd24a; text-anchor: middle; }
.ic-usd { font: bold 14px "Liberation Sans", sans-serif; fill: #fff; text-anchor: middle; }

/* Title bar */
.titlebar {
  position: relative;
  flex: none;
  height: 41px;
  display: flex;
  align-items: center;
  background: #0067c0;
  color: #fff;
}
.app-icon { width: 16px; height: 16px; margin: 1px 0 0 12px; }
.title { margin: 1px 0 0 25.5px; font-size: 11px; font-weight: normal; letter-spacing: -0.1px; }
.window-controls { display: flex; gap: 31.5px; margin-left: auto; padding-right: 15px; }
.peek { position: absolute; left: 840px; top: 0; width: 241px; height: 1px; background: linear-gradient(90deg, #0078d4 48px, #202020 48px); }

.quickbar { flex: none; height: 26px; display: flex; justify-content: flex-end; align-items: center; padding-right: 21px; }
.quickbar .chev { margin-left: 4px; }
.quickbar .skin { margin-left: 13px; }
.quickbar .skin + .chev { margin-left: 3px; }

/* Ribbon */
.ribbon {
  flex: none;
  display: flex;
  width: 1896px;
  height: 101px;
  margin-left: 12px;
  background: #fff;
  border: 1px solid #cfcfcf;
  border-radius: 8px;
}
.group { position: relative; display: flex; flex-direction: column; border-right: 1px solid #cfcfcf; }
.group:last-child { border-right: 0; }
.items { display: grid; flex: 1; }
.caption { height: 16px; text-align: center; color: #9b9b9b; line-height: 16px; }
.item { display: flex; flex-direction: column; align-items: center; padding-top: 9px; text-align: center; white-space: nowrap; }
.item svg { width: 32px; height: 32px; margin-bottom: 9px; }
.item .chev { width: 8px; height: 6px; margin: 2px 0 0; }
.g-dashboard { width: 75px; }
.g-dashboard .item, .g-dashboard .caption { padding-right: 1px; }
.g-cases { width: 321px; }
.g-cases .items { grid-template-columns: 71px 61px 43px 46px 42px 46px; padding-left: 5px; }
.g-manage { width: 323px; }
.g-manage .items { grid-template-columns: 62px 45px 49px 52px 58px 45px; padding-left: 5px; }
.g-accounts { width: 67px; }
.g-accounts .item { padding-right: 2px; }
.g-employees { width: 213px; }
.g-employees .items { grid-template-columns: 62px 70px 75px; padding-left: 5px; }
.g-expenses { width: 96px; }
.g-blank { width: 19px; }
.g-stats { width: 110px; }
.g-stats .caption { padding-right: 3px; }
.g-stats .items { grid-template-columns: 54px 42px; padding-left: 5px; }
.g-settings { width: 369px; }
.g-settings .items { grid-template-columns: 46px 64px 62px 48px 44px 50px 44px; padding-left: 4px; }
.g-quick { flex: 1; padding-right: 30px; }
.g-quick .items { grid-template-columns: 56px 93px 68px 45px; padding-left: 5px; }
.collapse { position: absolute; right: 9px; bottom: 11px; width: 12px; height: 8px; }
.stack { margin: 0; padding: 3px 0 0 7px; list-style: none; }
.g-expenses .stack { padding-left: 11px; }
.stack li { display: flex; align-items: center; height: 26px; }
.stack svg { width: 15px; height: 15px; margin-right: 5px; }
.stack .chev { width: 8px; height: 6px; margin: 1px 0 0 4px; }

/* Document tabs */
.tabs {
  position: relative;
  flex: none;
  display: flex;
  align-items: flex-end;
  height: 26px;
  margin: 0 1px;
  padding-left: 10px;
  border-bottom: 1px solid #00f000;
  font-size: 13px;
  font-weight: bold;
  letter-spacing: -0.45px;
}
.tab {
  display: flex;
  align-items: center;
  height: 22px;
  padding: 0 7px 0 10px;
  border: solid #cfcfcf;
  border-width: 1px 1px 0 0;
  border-radius: 5px 5px 0 0;
  white-space: nowrap;
}
.tab svg:first-child { width: 15px; height: 15px; margin-right: 3px; }
.tab .x { width: 9px; height: 9px; margin: 0 0 1px auto; }
.tabs .close-all { position: absolute; right: 10px; top: 8px; width: 10px; height: 10px; }
.t-quick { width: 141px; border-left-width: 1px; }
.t-quick svg:first-child { width: 12px; margin-right: 5px; }
.t-customers { width: 123px; }
.t-cases { width: 71px; }
.t-files { width: 94px; }
.t-dashboard { width: 124px; }
.t-judicial { width: 175px; }
.t-laws { width: 123px; }
.tab.active { width: 110px; height: 25px; padding-bottom: 1px; background: #00ff00; border-color: #00ff00; }

/* Page */
.page {
  flex: 1;
  display: flex;
  flex-direction: column;
  gap: 4px;
  margin: 0 1px;
  padding: 7px 7px 5px;
  border: solid #cfcfcf;
  border-width: 0 1px;
  background: #fff;
}
.panel { background: #f3f3f3; border: 1px solid #cfcfcf; border-radius: 4px; }
.toolbar { display: flex; gap: 4px; height: 58px; padding: 7px; }
.btn {
  display: flex;
  align-items: center;
  width: 185px;
  height: 42px;
  padding-left: 4px;
  border-radius: 4px;
  color: #fff;
  font-weight: bold;
  letter-spacing: 0;
}
.btn svg { width: 28px; height: 28px; }
.btn span { flex: 1; padding-top: 1px; text-align: center; }
.btn.add { background: #17a086; box-shadow: inset 0 0 0 2px #0067c0; }
.btn.edit { background: #2980b9; }
.btn.delete, .btn.exit { background: #e84c3d; }
.btn.print { background: #8e44ad; }
.btn.refresh { background: #2c3e50; }
.heading { flex: 1; border-radius: 4px; background: #17a086; color: #fff; font-size: 13px; font-weight: bold; line-height: 43px; text-align: center; letter-spacing: 0; }

.body { flex: 1; display: flex; flex-direction: column; gap: 4px; padding: 7px; }
.filters { display: flex; gap: 4px; height: 46px; }
.search { flex: 1; display: flex; padding: 7px 8px 0 10px; }
.lens { width: 26px; height: 26px; margin-top: 3px; }
.field {
  flex: 1;
  display: flex;
  align-items: center;
  justify-content: space-between;
  height: 25px;
  margin-left: 15px;
  padding: 0 4px 0 3px;
  background: #fff;
  border: 1px solid #e3e3e3;
  border-bottom-color: #8a8a8a;
  border-radius: 4px;
}
.field svg { width: 14px; height: 14px; }
.placeholder { color: #bdbdbd; font-size: 13px; font-weight: bold; letter-spacing: -0.06px; }
.export { display: flex; gap: 4px; width: 271px; padding: 7px; }
.ex { display: flex; align-items: center; justify-content: center; width: 82px; height: 30px; background: #fff; border: 1px solid #e3e3e3; border-bottom-color: #c9c9c9; border-radius: 4px; }
.ex svg { width: 24px; height: 24px; }
.perpage { display: flex; width: 206px; padding: 7px 8px 0 7px; font-weight: bold; letter-spacing: 0; }
.perpage label { width: 55px; line-height: 22px; }
.select {
  flex: 1;
  display: flex;
  align-items: center;
  justify-content: space-between;
  height: 22px;
  padding: 0 6px 1px 3px;
  background: #fff;
  border: 1px solid #e3e3e3;
  border-bottom-color: #8a8a8a;
  border-radius: 4px;
}
.select svg { width: 10px; height: 7px; }

.grid { flex: 1; padding: 7px; }
.table-wrap { height: 100%; background: #fff; border: 1px solid #cfcfcf; }
table { width: 1868px; border-collapse: separate; border-spacing: 0; table-layout: fixed; }
.c-name { width: 341px; }
.c-desc { width: 476px; }
.c-price { width: 414px; }
.c-status { width: 284px; }
.c-created { width: 165px; }
.c-edit { width: 71px; }
.c-delete { width: 117px; }
th, td { height: 25px; padding: 0 4px 1px; border: solid #e2e2e2; border-width: 0 1px 1px 0; text-align: left; white-space: nowrap; line-height: 14px; }
th { background: #fafafa; font-weight: bold; letter-spacing: 0; padding-left: 5px; }
th:last-child, td:last-child { border-right: 0; }
tbody td { background: #f3f3f3; font-size: 13px; letter-spacing: -0.19px; }
.filter td { padding-left: 3px; }
.filter .eq { margin-left: 3px; }
.abc { width: 16px; height: 12px; }
.eq { width: 9px; height: 3px; }
.num { text-align: right; }
.selected td { background: #e5e5e5; }
.alt td { background: #1abc9c; color: #fff; }
.act svg { margin: 0 auto; }
.go { width: 6px; height: 9px; }
tbody td.focus { background: #2c3e50; }

.pager { display: flex; gap: 4px; height: 58px; padding: 7px; }
.pg { display: flex; align-items: center; justify-content: center; width: 90px; height: 34px; background: #f3f3f3; border: 1px solid #e4e4e4; border-radius: 4px; }
.pg:last-child { width: 92px; }
.pg svg { width: 24px; height: 20px; }
.page-info { flex: 1; height: 34px; background: #fff; border: 1px solid #e4e4e4; border-bottom-color: #cfcfcf; border-radius: 4px; font-size: 13px; font-weight: bold; line-height: 33px; text-align: center; }
```
